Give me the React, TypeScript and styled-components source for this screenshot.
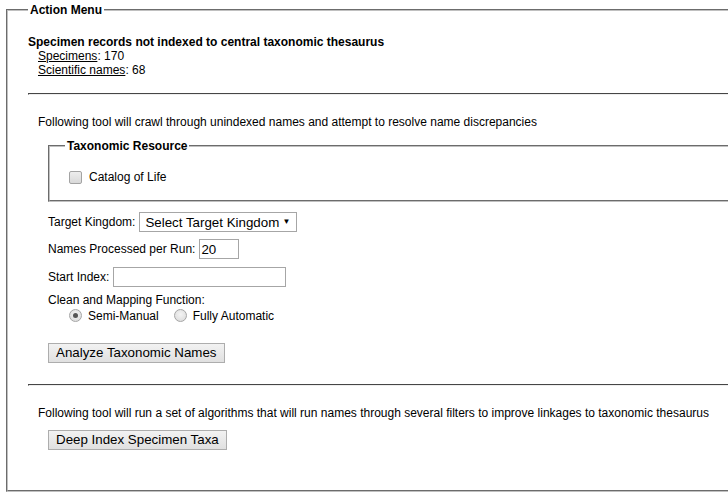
import styled, { createGlobalStyle } from 'styled-components';

const GlobalStyle = createGlobalStyle`
  body {
    margin: 0;
    overflow: hidden;
    background: #fff;
    color: #000;
    font-family: "Liberation Sans", Arial, sans-serif;
    font-size: 12px;
    line-height: 14px;
  }
`;

const App = () => {
  return (
    <Page>
      <GlobalStyle />
      <MenuBox>
        <Legend>Action Menu</Legend>
        <Heading>Specimen records not indexed to central taxonomic thesaurus</Heading>
        <Indent>
          <div>
            <Link href="#">Specimens</Link>: 170
          </div>
          <div>
            <Link href="#">Scientific names</Link>: 68
          </div>
        </Indent>
        <Divider top={16} />
        <Section>
          <Note>Following tool will crawl through unindexed names and attempt to resolve name discrepancies</Note>
          <FormBlock>
            <ResourceBox>
              <Legend>Taxonomic Resource</Legend>
              <CheckRow>
                <Checkbox type="checkbox" />
                <span>Catalog of Life</span>
              </CheckRow>
            </ResourceBox>
            <FieldRow top={10}>
              Target Kingdom:
              <SelectWrap>
                <Select defaultValue="">
                  <option value="">Select Target Kingdom</option>
                  <option value="Animalia">Animalia</option>
                  <option value="Plantae">Plantae</option>
                  <option value="Fungi">Fungi</option>
                </Select>
                <Arrow>▼</Arrow>
              </SelectWrap>
            </FieldRow>
            <FieldRow top={7}>
              Names Processed per Run:
              <TextInput type="text" defaultValue="20" width={40} />
            </FieldRow>
            <FieldRow top={8}>
              Start Index:
              <TextInput type="text" width={173} />
            </FieldRow>
            <FieldLabel>Clean and Mapping Function:</FieldLabel>
            <RadioRow>
              <Radio type="radio" name="cleanMode" defaultChecked />
              <RadioText>Semi-Manual</RadioText>
              <Radio type="radio" name="cleanMode" />
              <RadioText>Fully Automatic</RadioText>
            </RadioRow>
            <Button top={19}>Analyze Taxonomic Names</Button>
          </FormBlock>
        </Section>
        <Divider top={21} />
        <Section>
          <Note>
            Following tool will run a set of algorithms that will run names through several filters to improve
            linkages to taxonomic thesaurus
          </Note>
          <FormBlock>
            <Button top={10}>Deep Index Specimen Taxa</Button>
          </FormBlock>
        </Section>
      </MenuBox>
    </Page>
  );
};

export default App;

const Page = styled.div`
  width: 100%;
  height: 499px;
  overflow: hidden;
`;

const MenuBox = styled.fieldset`
  display: block;
  width: 820px;
  margin: 3px 0 0 6px;
  padding: 0 20px 40px 20px;
  border: 2px groove #c0c0c0;
  min-width: 0;
`;

const Legend = styled.legend`
  padding: 0 2px;
  font-weight: bold;
  line-height: 14px;
`;

const Heading = styled.div`
  margin-top: 18px;
  font-weight: bold;
`;

const Indent = styled.div`
  padding-left: 10px;
`;

const Link = styled.a`
  color: inherit;
  text-decoration: underline;
`;

const Divider = styled.hr<{ top: number }>`
  margin: ${({ top }) => `${top}px`} 0 0 0;
  border: 1px inset #eee;
  border-top-color: #9a9a9a;
  border-left-color: #9a9a9a;
  height: 0;
`;

const Section = styled.div`
  margin-top: 20px;
  padding-left: 10px;
`;

const Note = styled.div``;

const FormBlock = styled.div`
  padding-left: 10px;
`;

const ResourceBox = styled.fieldset`
  margin: 10px 0 0 0;
  padding: 0 15px 15px 15px;
  border: 2px groove #c0c0c0;
  min-width: 0;
`;

const CheckRow = styled.label`
  display: flex;
  align-items: center;
  height: 16px;
  margin-top: 16px;
`;

const Checkbox = styled.input`
  appearance: none;
  box-sizing: border-box;
  width: 13px;
  height: 13px;
  margin: 0 7px 0 4px;
  border: 1px solid #a3a3a3;
  border-radius: 2px;
  background: linear-gradient(#ededed, #d9d9d9);
`;

const FieldRow = styled.div<{ top: number }>`
  display: flex;
  align-items: center;
  height: 20px;
  margin-top: ${({ top }) => `${top}px`};
  white-space: pre;
`;

const SelectWrap = styled.div`
  position: relative;
  margin-left: 4px;
`;

const Select = styled.select`
  appearance: none;
  box-sizing: border-box;
  display: block;
  width: 158px;
  height: 20px;
  margin: 0;
  padding: 0 0 0 5px;
  border: 1px solid #a6a6a6;
  border-radius: 0;
  background: #fff;
  color: #000;
  font-family: "Liberation Sans", Arial, sans-serif;
  font-size: 13.33px;
  outline: none;
`;

const Arrow = styled.span`
  position: absolute;
  right: 7px;
  top: 5px;
  font-size: 8px;
  line-height: 10px;
  pointer-events: none;
`;

const TextInput = styled.input<{ width: number }>`
  box-sizing: border-box;
  width: ${({ width }) => `${width}px`};
  height: 20px;
  margin: 0 0 0 4px;
  padding: 0 1px;
  border: 1px solid #a6a6a6;
  border-radius: 0;
  font-family: "Liberation Sans", Arial, sans-serif;
  font-size: 13.33px;
  color: #000;
  outline: none;
`;

const FieldLabel = styled.div`
  margin-top: 6px;
`;

const RadioRow = styled.div`
  display: flex;
  align-items: center;
  height: 17px;
  padding-left: 20px;
`;

const Radio = styled.input`
  appearance: none;
  box-sizing: border-box;
  width: 13px;
  height: 13px;
  margin: 0 6px 0 1px;
  border: 1px solid #a6a6a6;
  border-radius: 50%;
  background: radial-gradient(circle at 50% 40%, #f4f4f4, #d8d8d8);
  position: relative;

  &:checked::after {
    content: '';
    position: absolute;
    left: 3px;
    top: 3px;
    width: 5px;
    height: 5px;
    border-radius: 50%;
    background: #555;
  }
`;

const RadioText = styled.span`
  margin-right: 14px;
`;

const Button = styled.button<{ top: number }>`
  display: block;
  box-sizing: border-box;
  height: 20px;
  margin-top: ${({ top }) => `${top}px`};
  padding: 0 7px;
  border: 1px solid #adadad;
  border-radius: 0;
  background: linear-gradient(#f2f2f2, #e0e0e0);
  color: #000;
  font-family: "Liberation Sans", Arial, sans-serif;
  font-size: 13.33px;
  line-height: 18px;
`;
